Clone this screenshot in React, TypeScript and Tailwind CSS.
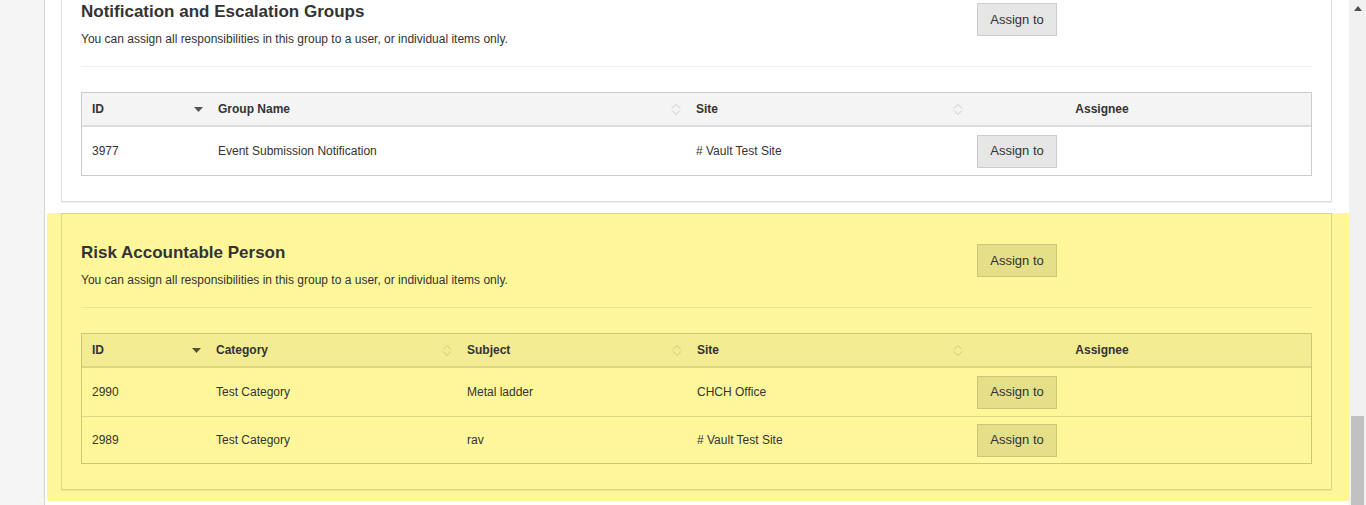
import type { ReactNode } from "react";

type Theme = {
    wrap: string;
    panel: string;
    rule: string;
    table: string;
    head: string;
    row: string;
    button: string;
    icon: string;
    arrow: string;
};

const plain: Theme = {
    wrap: "bg-white",
    panel: "bg-white border-[#dddddd]",
    rule: "border-[#eeeeee]",
    table: "border-[#cccccc]",
    head: "bg-[#f4f4f4] border-[#dddddd]",
    row: "border-[#dddddd]",
    button: "bg-[#e6e6e6] border-[#cccccc]",
    icon: "#cccccc",
    arrow: "#555555",
};

const highlighted: Theme = {
    wrap: "bg-[#fff799]",
    panel: "bg-[#fff799] border-[#ddd685]",
    rule: "border-[#eee68f]",
    table: "border-[#ccc67a]",
    head: "bg-[#f4ec92] border-[#ddd685]",
    row: "border-[#ddd685]",
    button: "bg-[#e6df8a] border-[#ccc67a]",
    icon: "#ccc67a",
    arrow: "#555233",
};

type Column = {
    label: string;
    sort?: "desc" | "both";
    center?: boolean;
};

type Group = {
    title: string;
    grid: string;
    columns: Column[];
    rows: string[][];
    theme: Theme;
};

function SortDesc({ color }: { color: string }) {
    return (
        <svg width="9" height="5" viewBox="0 0 9 5">
            <polygon points="0,0 9,0 4.5,5" fill={color} />
        </svg>
    );
}

function SortBoth({ color }: { color: string }) {
    return (
        <svg width="10" height="13" viewBox="0 0 10 13" fill="none" stroke={color} strokeWidth="1">
            <path d="M1 5.5 L5 1.5 L9 5.5" />
            <path d="M1 7.5 L5 11.5 L9 7.5" />
        </svg>
    );
}

function AssignButton({ theme }: { theme: Theme }) {
    return (
        <button className={`h-[33px] w-[80px] border text-[13px] text-[#333] ${theme.button}`}>
            Assign to
        </button>
    );
}

function HeadCell({ column, theme }: { column: Column; theme: Theme }) {
    let icon: ReactNode = null;
    if (column.sort === "desc") icon = <SortDesc color={theme.arrow} />;
    if (column.sort === "both") icon = <SortBoth color={theme.icon} />;
    return (
        <div
            className={`flex items-center text-[12px] font-bold ${
                column.center ? "justify-center px-[10px]" : "justify-between pl-[10px] pr-[5px]"
            }`}
        >
            <span>{column.label}</span>
            {icon}
        </div>
    );
}

function GroupPanel({ group }: { group: Group }) {
    const { theme } = group;
    return (
        <div className={`pl-[14px] pr-[17px] pb-[11px] ${theme.wrap}`}>
            <section
                className={`border px-[19px] pt-[27px] pb-[25px] shadow-[0_1px_1px_rgba(0,0,0,0.06)] ${theme.panel}`}
            >
                <div className="flex">
                    <div className="w-[896px]">
                        <h2 className="mt-[2px] text-[17px] leading-[20px] font-bold">{group.title}</h2>
                        <p className="mt-[9px] text-[12px] leading-[17px]">
                            You can assign all responsibilities in this group to a user, or individual items only.
                        </p>
                    </div>
                    <div className="mt-[3px]">
                        <AssignButton theme={theme} />
                    </div>
                </div>

                <div className={`mt-[18px] border-t ${theme.rule}`} />

                <div className={`mt-[25px] border ${theme.table}`}>
                    <div className={`grid h-[34px] border-b-2 ${group.grid} ${theme.head}`}>
                        {group.columns.map((column) => (
                            <HeadCell key={column.label} column={column} theme={theme} />
                        ))}
                        <div />
                    </div>
                    {group.rows.map((row, i) => (
                        <div
                            key={row[0]}
                            className={`grid text-[12px] ${group.grid} ${
                                i === 0 ? "h-[48px]" : `h-[47px] border-t ${theme.row}`
                            }`}
                        >
                            {row.map((cell, j) => (
                                <div key={j} className="flex items-center pl-[10px]">
                                    {cell}
                                </div>
                            ))}
                            <div className="flex items-center pl-[9px]">
                                <AssignButton theme={theme} />
                            </div>
                            <div />
                        </div>
                    ))}
                </div>
            </section>
        </div>
    );
}

const groups: Group[] = [
    {
        title: "Notification and Escalation Groups",
        grid: "grid-cols-[126px_478px_282px_268px_1fr]",
        columns: [
            { label: "ID", sort: "desc" },
            { label: "Group Name", sort: "both" },
            { label: "Site", sort: "both" },
            { label: "Assignee", center: true },
        ],
        rows: [["3977", "Event Submission Notification", "# Vault Test Site"]],
        theme: plain,
    },
    {
        title: "Risk Accountable Person",
        grid: "grid-cols-[124px_251px_230px_281px_268px_1fr]",
        columns: [
            { label: "ID", sort: "desc" },
            { label: "Category", sort: "both" },
            { label: "Subject", sort: "both" },
            { label: "Site", sort: "both" },
            { label: "Assignee", center: true },
        ],
        rows: [
            ["2990", "Test Category", "Metal ladder", "CHCH Office"],
            ["2989", "Test Category", "rav", "# Vault Test Site"],
        ],
        theme: highlighted,
    },
];

export default function App() {
    return (
        <div className="flex h-[505px] w-[1366px] overflow-hidden bg-white font-['Liberation_Sans',Arial,sans-serif] text-[#333]">
            <div className="w-[45px] shrink-0 border-r border-[#d4d4d4] bg-[#f5f5f5]" />
            <main className="min-w-0 flex-1 overflow-hidden pl-[2px]">
                <div className="-mt-[28px]">
                    {groups.map((group) => (
                        <GroupPanel key={group.title} group={group} />
                    ))}
                </div>
            </main>
            <div className="flex w-[17px] shrink-0 flex-col bg-[#f1f1f1]">
                <div className="flex h-[17px] items-center justify-center">
                    <svg width="8" height="5" viewBox="0 0 8 5">
                        <polygon points="4,0 8,5 0,5" fill="#505050" />
                    </svg>
                </div>
                <div className="flex flex-1 flex-col justify-end px-[2px]">
                    <div className="h-[89px] bg-[#c1c1c1]" />
                </div>
            </div>
        </div>
    );
}
